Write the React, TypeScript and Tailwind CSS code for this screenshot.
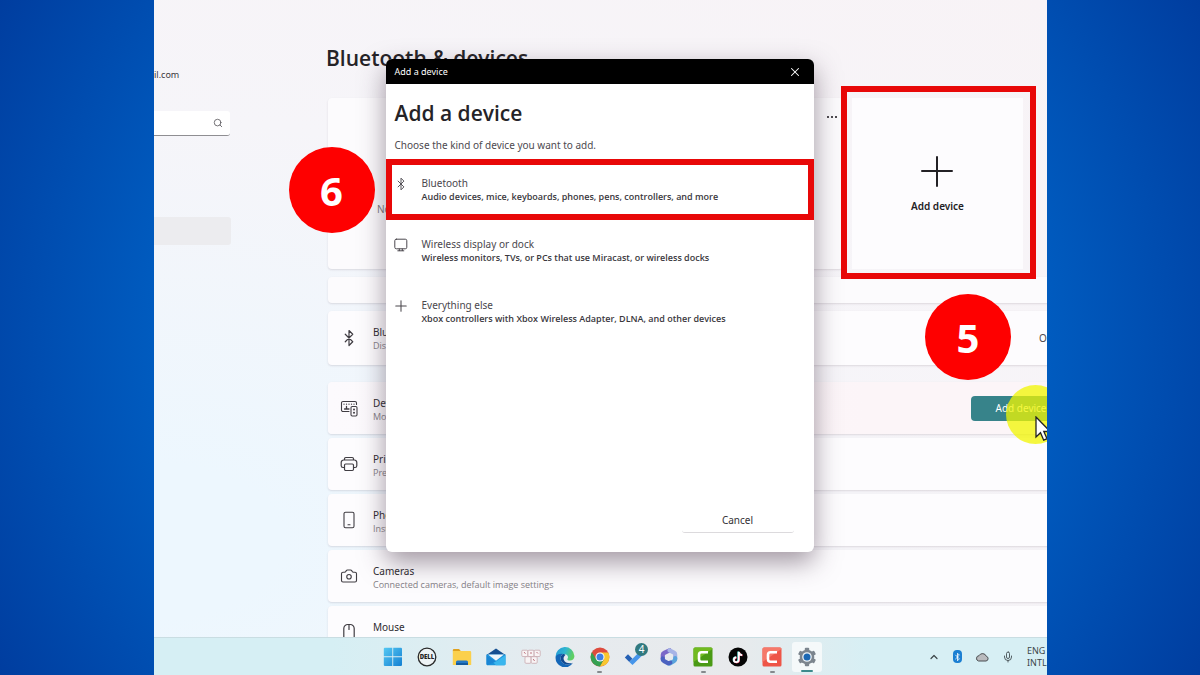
import type { ReactNode } from "react";
import { Bluetooth, Camera, ChevronUp, Mic, Plus, Search, X } from "lucide-react";

function DevicesIcon() {
  return (
    <svg viewBox="0 0 18 18" className="size-[18px]" fill="none" stroke="currentColor" strokeWidth="1.1" strokeLinecap="round" strokeLinejoin="round">
      <path d="M9 12.5H3A1.5 1.5 0 0 1 1.5 11V4A1.5 1.5 0 0 1 3 2.5H15A1.5 1.5 0 0 1 16.5 4V5.500" />
      <path d="M4 5.200h.01M6.500 5.200h.01M9 5.200h.01M11.500 5.200h.01M14 5.200h.01M6.500 7.500v2.500M4.500 10H9" strokeWidth="1.300" />
      <rect x="11" y="7.500" width="6" height="9.500" rx="1.200" />
      <path d="M14 10.500h.01M14 13.800h.01" strokeWidth="2" />
    </svg>
  );
}

function PrinterIcon() {
  return (
    <svg viewBox="0 0 18 18" className="size-[18px]" fill="none" stroke="currentColor" strokeWidth="1.2" strokeLinejoin="round">
      <path d="M4.500 5V3.800A1.300 1.300 0 0 1 5.800 2.500h6.400a1.300 1.300 0 0 1 1.300 1.300V5" />
      <path d="M4.500 12.500H3A1.800 1.800 0 0 1 1.200 10.700V7.500A2.500 2.500 0 0 1 3.700 5h10.600a2.500 2.500 0 0 1 2.500 2.500v3.200a1.800 1.800 0 0 1-1.800 1.800h-1.500" />
      <rect x="4.500" y="9" width="9" height="6.500" rx="1.200" />
    </svg>
  );
}

function PhoneIcon() {
  return (
    <svg viewBox="0 0 18 18" className="size-[18px]" fill="none" stroke="currentColor" strokeWidth="1.1" strokeLinecap="round">
      <rect x="4" y="1.200" width="10" height="15.600" rx="1.600" />
      <path d="M8 13.800h2" />
    </svg>
  );
}

function MouseIcon() {
  return (
    <svg viewBox="0 0 18 18" className="size-[18px]" fill="none" stroke="currentColor" strokeWidth="1.2" strokeLinecap="round">
      <rect x="3.800" y="1.500" width="10.400" height="16" rx="4" />
      <path d="M9 2v4.500" />
    </svg>
  );
}

function DisplayIcon() {
  return (
    <svg viewBox="0 0 14 14" className="size-3.5" fill="none" stroke="currentColor" strokeWidth="1" strokeLinecap="round">
      <rect x="0.800" y="1.200" width="12" height="9.600" rx="1.500" />
      <path d="M5.300 11v1.600M8.300 11v1.600M3.800 12.800h6" />
    </svg>
  );
}

function CamtasiaIcon({ from, to }: { from: string; to: string }) {
  return (
    <svg viewBox="0 0 20 20" className="size-5">
      <rect x="0.500" y="0.500" width="19" height="19" rx="1.500" fill={to} />
      <path d="M0.500 2A1.500 1.500 0 0 1 2 .5h16A1.500 1.500 0 0 1 19.500 2L.5 15z" fill={from} />
      <path d="M15 5.200H8.500A2.500 2.500 0 0 0 6 7.700v4.600a2.500 2.500 0 0 0 2.500 2.500H15" fill="none" stroke="#fff" strokeWidth="2.600" />
    </svg>
  );
}

const apps: { name: string; running?: boolean; active?: boolean; icon: ReactNode }[] = [
  {
    name: "Start",
    icon: (
      <svg viewBox="0 0 20 20" className="size-5">
        <defs>
          <linearGradient id="win" x1="0" y1="0" x2="1" y2="1">
            <stop offset="0" stopColor="#54c8f3" />
            <stop offset="1" stopColor="#1580d2" />
          </linearGradient>
        </defs>
        <path d="M1.500 .8h7.800v8.500H.8V1.500zM10.200 .8h8l.8.7v7.800h-8.800zM.8 10.200h8.500V19H1.500l-.7-.8zM10.200 10.200H19v8l-.8.8h-8z" fill="url(#win)" />
      </svg>
    ),
  },
  {
    name: "Dell",
    icon: (
      <svg viewBox="0 0 20 20" className="size-5">
        <circle cx="10" cy="10" r="8.800" fill="#eef3f5" stroke="#2a2a2a" strokeWidth="1.300" />
        <text x="10" y="12.200" textAnchor="middle" fontSize="6" fontWeight="800" fontFamily="Open Sans, sans-serif" fill="#222">DELL</text>
      </svg>
    ),
  },
  {
    name: "File Explorer",
    icon: (
      <svg viewBox="0 0 20 20" className="size-5">
        <path d="M.8 3.200A1.200 1.200 0 0 1 2 2h5l2 2.300H.8z" fill="#e0a11d" />
        <path d="M.8 4h17.200a1.200 1.200 0 0 1 1.200 1.200V18H.8z" fill="#fbd04c" />
        <path d="M4 18v-3a1.500 1.500 0 0 1 1.500-1.500h9a1.500 1.500 0 0 1 1.500 1.500v3z" fill="#2378c4" />
        <path d="M4 16h12v2H4z" fill="#145a9e" />
      </svg>
    ),
  },
  {
    name: "Mail",
    icon: (
      <svg viewBox="0 0 20 20" className="size-5">
        <path d="M.5 8L10 1.500 19.500 8z" fill="#154f91" />
        <path d="M.5 7.500h19V17a1.300 1.300 0 0 1-1.300 1.300H1.800A1.300 1.300 0 0 1 .5 17z" fill="#1b93dc" />
        <path d="M2 7.500h16L10 13.800z" fill="#eef6fb" />
        <path d="M.5 8l9.500 6.500L19.500 8v9a1.300 1.300 0 0 1-1.300 1.300H10z" fill="#39b6ee" />
        <path d="M.5 8l9.500 6.500-8.500 3.700a1.300 1.300 0 0 1-1-1.200z" fill="#1a86d4" />
      </svg>
    ),
  },
  {
    name: "Keyboard",
    icon: (
      <svg viewBox="0 0 20 20" className="size-5" fill="#f8f4f5" stroke="#c4a0a6" strokeWidth="0.700">
        <rect x="0.800" y="3.200" width="6" height="6.300" rx="1" />
        <rect x="7" y="3.200" width="6" height="6.300" rx="1" />
        <rect x="13.200" y="3.200" width="6" height="6.300" rx="1" />
        <rect x="4" y="9.700" width="6" height="6.600" rx="1" />
        <rect x="10.200" y="9.700" width="6" height="6.600" rx="1" />
        <path d="M3 5l1.500 1.800M10 5v2M15.500 5l1.500 1.500M12.200 12l1.400 2" stroke="#a63f4e" />
      </svg>
    ),
  },
  {
    name: "Edge",
    icon: (
      <svg viewBox="0 0 20 20" className="size-5">
        <defs>
          <linearGradient id="edge" x1="0" y1="0" x2="1" y2="0.300">
            <stop offset="0" stopColor="#2497da" />
            <stop offset="0.550" stopColor="#2fb6cf" />
            <stop offset="1" stopColor="#5fcf62" />
          </linearGradient>
        </defs>
        <path d="M.6 10A9.400 9.400 0 0 1 19.400 9c.2 3-2 4.600-4.500 4.600-2 0-3.200-.8-2.300-2 .9-1.300.3-4.200-3-4.300C5.500 7.200 1.800 8.500 .6 10z" fill="url(#edge)" />
        <path d="M.6 10C1.500 7.500 5 6.300 8.300 7c-2.300 1-3.100 3.200-2.600 5.500.6 2.900 3.600 5.200 7.300 5.100 2-.1 3.800-.9 5-1.800A9.400 9.400 0 0 1 .6 10z" fill="#1467b8" />
        <path d="M8.300 7C6 8 5.200 10.200 5.700 12.500c.6 2.900 3.600 5.200 7.300 5.100 2-.1 4-1 5-1.800-3 1.200-8.400.5-9.300-3.300-.5-2 .3-3.500 1.700-4.600C10 7.400 9 7 8.300 7z" fill="#104a92" />
      </svg>
    ),
  },
  {
    name: "Chrome",
    running: true,
    icon: (
      <svg viewBox="0 0 20 20" className="size-5">
        <circle cx="10" cy="10" r="9.400" fill="#dd4b3e" />
        <path d="M10 5.500h8.250A9.400 9.400 0 0 1 9.800 19.400L13.900 12.200z" fill="#f8c72f" />
        <path d="M1.900 5.200A9.400 9.400 0 0 0 9.800 19.400L13.900 12.300 6.100 12.300z" fill="#35a152" />
        <circle cx="10" cy="10" r="4.500" fill="#fff" />
        <circle cx="10" cy="10" r="3.500" fill="#3f7fe3" />
      </svg>
    ),
  },
  {
    name: "To Do",
    icon: (
      <svg viewBox="0 0 20 20" className="size-5">
        <path d="M.8 10.500L4 7.300l4.500 4.400-3.200 3.200z" fill="#2560b4" />
        <path d="M5.300 14.900L16.500 3.700l3.200 3.200L8.500 18z" fill="#4695ea" />
      </svg>
    ),
  },
  {
    name: "Microsoft 365",
    icon: (
      <svg viewBox="0 0 20 20" className="size-5" fill="none" strokeWidth="4.200" strokeLinejoin="round" strokeLinecap="round">
        <path d="M10.500 3.300L5 6a2 2 0 0 0-1.200 1.800v4" stroke="#7a68c8" />
        <path d="M10.500 3.300l4.500 2.400a2.200 2.200 0 0 1 1.200 2v4" stroke="#a7b4e6" />
        <path d="M16.200 11v1.300a2 2 0 0 1-1 1.700L10.500 16.600" stroke="#5aa4dc" />
        <path d="M3.800 11.500a2.400 2.400 0 0 0 1.300 2.600l4.200 2.300 2-.8" stroke="#4b62c0" />
      </svg>
    ),
  },
  { name: "Camtasia", running: true, icon: <CamtasiaIcon from="#71ba20" to="#4a9a15" /> },
  {
    name: "TikTok",
    icon: (
      <svg viewBox="0 0 20 20" className="size-5">
        <circle cx="10" cy="10" r="9.500" fill="#050505" />
        <g fill="none" strokeWidth="1.800">
          <path d="M10.300 4.500v8a2.400 2.400 0 1 1-2.400-2.400M10.300 4.500c.2 2 1.600 3.200 3.500 3.300" stroke="#4ff0ea" />
          <path d="M11.100 5.100v8a2.400 2.400 0 1 1-2.400-2.400M11.100 5.100c.2 2 1.600 3.200 3.500 3.300" stroke="#f23a60" />
          <path d="M10.700 4.800v8a2.400 2.400 0 1 1-2.400-2.400M10.700 4.800c.2 2 1.600 3.200 3.500 3.300" stroke="#fff" />
        </g>
      </svg>
    ),
  },
  { name: "Recorder", running: true, icon: <CamtasiaIcon from="#f5796a" to="#ee5547" /> },
  {
    name: "Settings",
    active: true,
    icon: (
      <svg viewBox="0 0 20 20" className="size-5">
        <g fill="#7c858e">
          <rect x="7.800" y="0.800" width="4.400" height="18.400" rx="1" />
          <rect x="7.800" y="0.800" width="4.400" height="18.400" rx="1" transform="rotate(60 10 10)" />
          <rect x="7.800" y="0.800" width="4.400" height="18.400" rx="1" transform="rotate(120 10 10)" />
          <circle cx="10" cy="10" r="7.300" />
        </g>
        <circle cx="10" cy="10" r="4.800" fill="#eef3f7" />
        <circle cx="10" cy="10" r="3.500" fill="#1c68b3" />
      </svg>
    ),
  },
];

const kinds = [
  {
    title: "Bluetooth",
    text: "Audio devices, mice, keyboards, phones, pens, controllers, and more",
    icon: <Bluetooth className="size-3.5 shrink-0" strokeWidth={1.6} />,
    marked: true,
  },
  {
    title: "Wireless display or dock",
    text: "Wireless monitors, TVs, or PCs that use Miracast, or wireless docks",
    icon: <DisplayIcon />,
  },
  {
    title: "Everything else",
    text: "Xbox controllers with Xbox Wireless Adapter, DLNA, and other devices",
    icon: <Plus className="size-[18px] shrink-0" strokeWidth={1.4} />,
  },
];

function StepBadge({ step, className }: { step: number; className: string }) {
  return (
    <span className={`absolute z-10 flex size-[86px] items-center justify-center rounded-full bg-[#fe0000] pt-0.5 text-[40px] font-bold text-white ${className}`}>
      {step}
    </span>
  );
}

function SettingRow({ icon, title, text, className = "h-[52px] bg-[#fdfcfe]", children }: { icon: ReactNode; title: string; text?: string; className?: string; children?: ReactNode }) {
  return (
    <li className={`flex shrink-0 items-start rounded-[4px] pr-6 pl-3 shadow-[0_1px_2px_rgba(90,70,90,0.16)] ${className}`}>
      <span className="flex h-full w-[33px] items-center text-[#403d43]">{icon}</span>
      <div className="pt-[15px] leading-[13px]">
        <p className="text-[10px] text-[#2d2b30]">{title}</p>
        {text && <p className="font-['Open_Sans',sans-serif] text-[9px] whitespace-nowrap text-[#858187]">{text}</p>}
      </div>
      {children}
    </li>
  );
}

function AddDeviceDialog() {
  return (
    <div role="dialog" aria-labelledby="dialog-title" className="relative flex h-[493px] w-[428px] flex-col rounded-[6px] bg-white shadow-[0_10px_26px_rgba(70,50,70,0.5)]">
      <StepBadge step={6} className="top-[88px] -left-[97px]" />
      <div className="flex h-[25px] shrink-0 items-center justify-between rounded-t-[6px] bg-black pr-3 pl-[9px] text-white">
        <span className="text-[9px]">Add a device</span>
        <button aria-label="Close">
          <X className="size-3.5" strokeWidth={1.8} />
        </button>
      </div>
      <h2 id="dialog-title" className="mt-3.5 pl-[9px] font-['Open_Sans',sans-serif] text-[21px] leading-[30px] font-semibold text-[#252327]">Add a device</h2>
      <p className="mt-2.5 pl-[9px] text-[10px] leading-[14px] text-[#4d4a50]">Choose the kind of device you want to add.</p>
      <ul className="mt-[7px]">
        {kinds.map(k => (
          <li key={k.title} className="relative">
            <button className="flex h-[61px] w-full items-start gap-3.5 pt-[18px] pl-2 text-left">
              <span className="flex size-3.5 items-center justify-center text-[#4a474d]">{k.icon}</span>
              <span className="flex flex-col leading-[13px]">
                <span className="text-[10px] text-[#4a474d]">{k.title}</span>
                <span className="font-['Open_Sans',sans-serif] text-[9px] font-semibold text-[#3a383d]">{k.text}</span>
              </span>
            </button>
            {k.marked && <span className="pointer-events-none absolute inset-0 border-[6px] border-[#e80808]" />}
          </li>
        ))}
      </ul>
      <button className="mt-auto mr-5 mb-[19px] h-[25px] w-28 self-end rounded-[3px] border-b border-[#dcdadd] text-[10px] text-[#333136]">Cancel</button>
    </div>
  );
}

export default function App() {
  return (
    <div className="h-screen overflow-hidden bg-[radial-gradient(circle_at_center,#005cc0_440px,#003d9f_690px)] pr-[153px] pl-[154px] font-['Noto_Sans','Open_Sans',sans-serif]">
      <div className="relative flex h-full flex-col overflow-hidden">
        {/* Settings window */}
        <div className="flex min-h-0 flex-1 overflow-hidden bg-[radial-gradient(ellipse_at_0%_85%,#edf7fe_10%,#f6f5f9_55%,#f8f3f6_100%)]">
          <aside className="w-[77px] shrink-0 text-[#39373c]">
            <p className="mt-[67px] text-[9px] leading-4">il.com</p>
            <div className="relative mt-7">
              <input aria-label="Find a setting" className="block h-[25px] w-[76px] rounded-r-[3px] border-b border-[#8f8e92] bg-white" />
              <Search className="absolute top-[7px] right-2 size-2.5 text-[#5a585d]" strokeWidth={2} />
            </div>
            <div className="mt-[81px] h-7 rounded-r-[3px] bg-[#ececef]" />
          </aside>

          <main className="ml-[97px] flex min-w-0 flex-1 flex-col">
            <h1 className="mt-[43px] mb-[25px] -ml-0.5 font-['Open_Sans',sans-serif] text-[21px] leading-[30px] font-semibold whitespace-nowrap text-[#252327]">Bluetooth &amp; devices</h1>
            <div className="-mr-12 flex flex-col">
              <div className="flex gap-[9px] pr-[72px]">
                <section className="relative h-[171px] flex-1 rounded-[4px] bg-[#fcfbfd] shadow-[0_1px_2px_rgba(90,70,90,0.16)]">
                  <p className="pt-[104px] pl-[49px] text-[10px] leading-[14px] text-[#7a777c]">Not connected</p>
                  <button aria-label="More options" className="absolute top-[18px] right-1.5 flex gap-0.5">
                    <i className="size-0.5 bg-[#4e4b50]" />
                    <i className="size-0.5 bg-[#4e4b50]" />
                    <i className="size-0.5 bg-[#4e4b50]" />
                  </button>
                </section>
                <div className="relative">
                  <button className="flex size-[171px] flex-col items-center bg-[#fdfcfe] pt-14 text-[#232125]">
                    <svg viewBox="0 0 34 34" className="size-[34px]" stroke="currentColor" strokeWidth="2" strokeLinecap="round">
                      <path d="M16 3v29M1 17h30" />
                    </svg>
                    <span className="mt-2.5 text-[10px] leading-4 font-semibold">Add device</span>
                  </button>
                  <span className="pointer-events-none absolute -top-3 -right-[13px] -bottom-2.5 -left-[11px] border-[6px] border-[#e80808]" />
                  <StepBadge step={5} className="top-[196px] left-[73px]" />
                </div>
              </div>

              <div className="mt-2 h-[26px] rounded-[4px] bg-[#fcfbfd] shadow-[0_1px_2px_rgba(90,70,90,0.16)]" />

              <ul className="mt-2 flex flex-col gap-1">
                <SettingRow icon={<Bluetooth className="size-[18px]" strokeWidth={1.6} />} title="Bluetooth" text="Discoverable" className="mb-[13px] h-[54px] bg-[#fdfcfe]">
                  <span className="ml-auto w-8 self-center text-[10px] text-[#4a474c]">On</span>
                </SettingRow>
                <SettingRow icon={<DevicesIcon />} title="Devices" text="Mouse, keyboard, pen" className="h-[52px] bg-[linear-gradient(90deg,#fcfafd,#fcf5f8_70%)]">
                  <span className="relative ml-auto self-center">
                    <button className="block h-[25px] w-[100px] rounded-[4px] bg-[#37838a] text-[10px] text-white">Add device</button>
                    <span className="pointer-events-none absolute -top-[11px] left-[35px] size-[59px] rounded-full bg-[#f2f500]/75" />
                    <svg viewBox="0 0 18 28" className="pointer-events-none absolute top-5 left-16 h-7 w-[18px]" fill="#fff" stroke="#222" strokeWidth="1.300">
                      <path d="M1 1v20l4.500-4.300 3.200 7.500 3.300-1.500-3.200-7.200h6.400z" />
                    </svg>
                  </span>
                </SettingRow>
                <SettingRow icon={<PrinterIcon />} title="Printers & scanners" text="Preferences, troubleshoot" />
                <SettingRow icon={<PhoneIcon />} title="Phone Link" text="Instantly access your phone" />
                <SettingRow icon={<Camera className="size-[18px]" strokeWidth={1.5} />} title="Cameras" text="Connected cameras, default image settings" />
                <SettingRow icon={<MouseIcon />} title="Mouse" />
              </ul>
            </div>
          </main>
        </div>

        {/* Taskbar */}
        <footer className="grid h-[38px] shrink-0 grid-cols-[1fr_auto_1fr] items-center border-t border-[#c9dde2] bg-[linear-gradient(90deg,#d6eff4_20%,#e6ebef_45%,#e8eaec_65%,#d7eff4_80%)]">
          <nav className="col-start-2 mr-0.5 flex w-[444px] justify-between">
            {apps.map(a => (
              <button
                key={a.name}
                aria-label={a.name}
                className={`relative flex size-[30px] items-center justify-center rounded-[3px] ${a.active ? "bg-[#f5f9fa]" : ""}`}
              >
                {a.icon}
                {a.running && <i className="absolute -bottom-px h-0.5 w-[5px] rounded-full bg-[#85898c]" />}
                {a.active && <i className="absolute bottom-0 h-0.5 w-3 rounded-full bg-[#3d8a8c]" />}
                {a.name === "To Do" && (
                  <i className="absolute top-px right-px flex size-[13px] items-center justify-center rounded-full bg-[#30797f] text-[10px] leading-none text-white not-italic">4</i>
                )}
              </button>
            ))}
          </nav>
          <div className="flex items-center justify-end gap-[13px] text-[#3c4649]">
            <ChevronUp className="size-3" strokeWidth={2.4} />
            <span className="flex h-[13px] w-[9px] items-center justify-center rounded-[4px] bg-[#1b7fd2] text-white">
              <Bluetooth className="size-2.5" strokeWidth={2.2} />
            </span>
            <svg viewBox="0 0 14 10" className="h-2.5 w-3.5" fill="#b9babd" stroke="#4b4f52" strokeWidth="1">
              <path d="M3.500 9h7.500a2.400 2.400 0 0 0 .3-4.700A4 4 0 0 0 4 3.700 2.700 2.700 0 0 0 3.500 9z" />
            </svg>
            <Mic className="size-3" strokeWidth={1.7} />
            <span className="w-5 text-[9px] leading-3">
              ENG
              <br />
              INTL
            </span>
          </div>
        </footer>

        {/* Dialog layer */}
        <div className="absolute inset-x-0 top-[59px] flex justify-center pr-0.5">
          <AddDeviceDialog />
        </div>
      </div>
    </div>
  );
}
